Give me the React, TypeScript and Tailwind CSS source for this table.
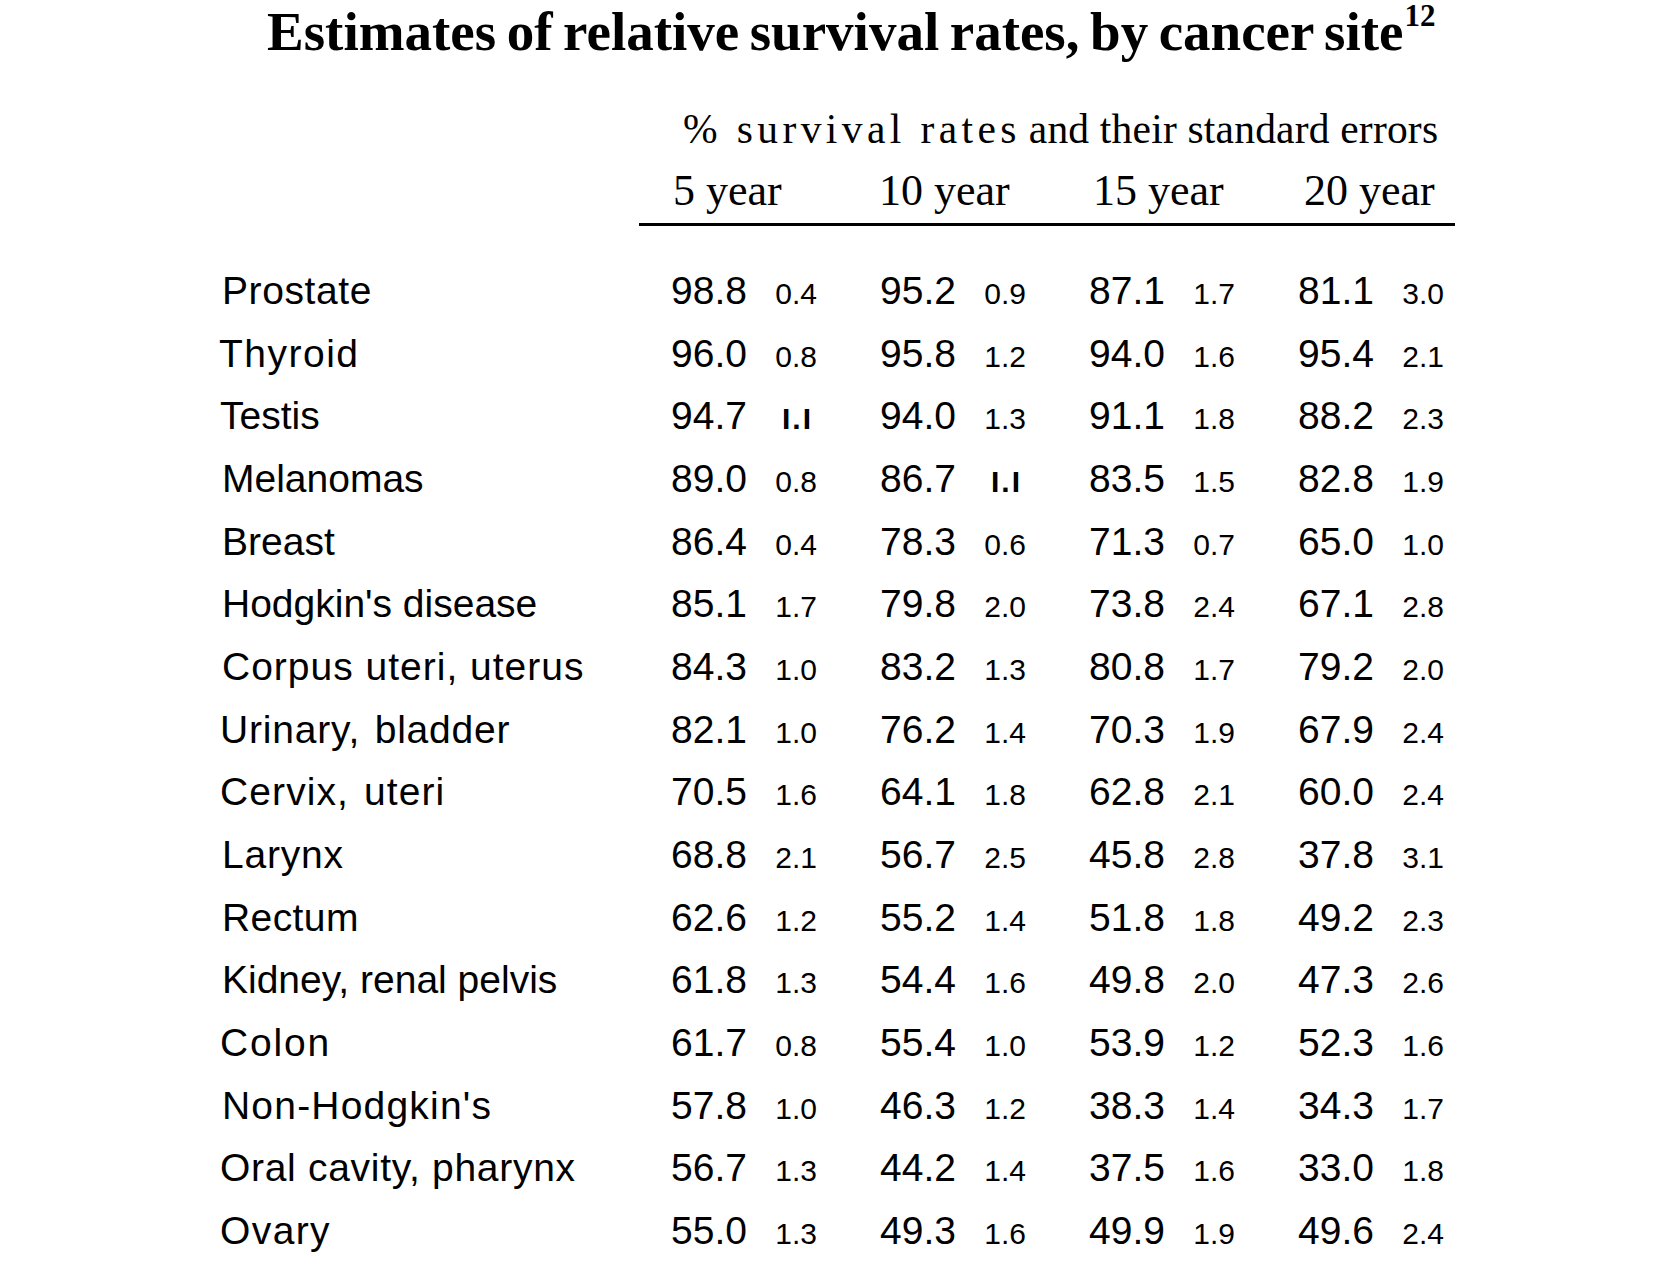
import React from "react";

type Cell = [string, string];
type Row = { name: string; cls: string; cells: Cell[] };

const rows: Row[] = [
  { name: "Prostate", cls: "tracking-[0.6px]", cells: [["98.8", "0.4"], ["95.2", "0.9"], ["87.1", "1.7"], ["81.1", "3.0"]] },
  { name: "Thyroid", cls: "tracking-[1.5px] -ml-[3px]", cells: [["96.0", "0.8"], ["95.8", "1.2"], ["94.0", "1.6"], ["95.4", "2.1"]] },
  { name: "Testis", cls: "-ml-[2px]", cells: [["94.7", "I.I"], ["94.0", "1.3"], ["91.1", "1.8"], ["88.2", "2.3"]] },
  { name: "Melanomas", cls: "", cells: [["89.0", "0.8"], ["86.7", "I.I"], ["83.5", "1.5"], ["82.8", "1.9"]] },
  { name: "Breast", cls: "", cells: [["86.4", "0.4"], ["78.3", "0.6"], ["71.3", "0.7"], ["65.0", "1.0"]] },
  { name: "Hodgkin's disease", cls: "", cells: [["85.1", "1.7"], ["79.8", "2.0"], ["73.8", "2.4"], ["67.1", "2.8"]] },
  { name: "Corpus uteri, uterus", cls: "tracking-[1px]", cells: [["84.3", "1.0"], ["83.2", "1.3"], ["80.8", "1.7"], ["79.2", "2.0"]] },
  { name: "Urinary, bladder", cls: "tracking-[0.8px] [word-spacing:3px] -ml-[2px]", cells: [["82.1", "1.0"], ["76.2", "1.4"], ["70.3", "1.9"], ["67.9", "2.4"]] },
  { name: "Cervix, uteri", cls: "tracking-[1.1px] [word-spacing:3px] -ml-[2px]", cells: [["70.5", "1.6"], ["64.1", "1.8"], ["62.8", "2.1"], ["60.0", "2.4"]] },
  { name: "Larynx", cls: "tracking-[0.8px]", cells: [["68.8", "2.1"], ["56.7", "2.5"], ["45.8", "2.8"], ["37.8", "3.1"]] },
  { name: "Rectum", cls: "tracking-[0.4px]", cells: [["62.6", "1.2"], ["55.2", "1.4"], ["51.8", "1.8"], ["49.2", "2.3"]] },
  { name: "Kidney, renal pelvis", cls: "", cells: [["61.8", "1.3"], ["54.4", "1.6"], ["49.8", "2.0"], ["47.3", "2.6"]] },
  { name: "Colon", cls: "tracking-[1.8px] -ml-[2px]", cells: [["61.7", "0.8"], ["55.4", "1.0"], ["53.9", "1.2"], ["52.3", "1.6"]] },
  { name: "Non-Hodgkin's", cls: "tracking-[1.2px]", cells: [["57.8", "1.0"], ["46.3", "1.2"], ["38.3", "1.4"], ["34.3", "1.7"]] },
  { name: "Oral cavity, pharynx", cls: "tracking-[0.7px] -ml-[2px]", cells: [["56.7", "1.3"], ["44.2", "1.4"], ["37.5", "1.6"], ["33.0", "1.8"]] },
  { name: "Ovary", cls: "tracking-[1.4px] -ml-[2px]", cells: [["55.0", "1.3"], ["49.3", "1.6"], ["49.9", "1.9"], ["49.6", "2.4"]] },
];

const headers: { text: string; cls: string }[] = [
  { text: "5 year", cls: "w-[206px]" },
  { text: "10 year", cls: "w-[214px]" },
  { text: "15 year", cls: "w-[211px]" },
  { text: "20 year", cls: "w-[209px]" },
];

export default function App() {
  return (
    <div className="w-[1668px] min-h-[1274px] bg-white text-black">
      {/* Title */}
      <div className="pl-[267px] pt-[2px] h-[62px] whitespace-nowrap font-['Liberation_Serif','Times_New_Roman',serif] font-bold text-[55px] leading-[60px] [word-spacing:-3.2px]">
        Estimates of relative survival rates, by cancer site
        <span className="relative top-[-24px] ml-[1px] text-[31px] leading-none">12</span>
      </div>

      {/* Subtitle */}
      <div className="mt-[42px] pl-[683px] h-[50px] whitespace-nowrap font-['Liberation_Serif','Times_New_Roman',serif] text-[41.5px] leading-[50px]">
        <span className="tracking-[4.4px]">% survival rates</span>
        <span className="ml-[8px] tracking-[0.2px]">and their standard errors</span>
      </div>

      {/* Column headers */}
      <div className="mt-[12px] pl-[673px] h-[50px] flex font-['Liberation_Serif','Times_New_Roman',serif] text-[44px] leading-[50px] whitespace-nowrap">
        {headers.map((h) => (
          <div key={h.text} className={h.cls}>
            {h.text}
          </div>
        ))}
      </div>

      {/* Rule */}
      <div className="mt-[7px] ml-[639px] w-[816px] h-[3px] bg-black" />

      {/* Rows */}
      <div className="mt-[34px] pl-[222px] font-['Liberation_Sans',Arial,sans-serif]">
        {rows.map((r) => (
          <div key={r.name} className="flex items-baseline h-[62.67px] leading-[62.67px] whitespace-nowrap">
            <div className="w-[449px] text-[39px]">
              <span className={r.cls}>{r.name}</span>
            </div>
            {r.cells.map(([big, small], i) => (
              <div key={i} className="w-[209px] flex items-baseline">
                <span className="w-[76px] text-[39px]">{big}</span>
                <span
                  className={
                    small === "I.I"
                      ? "w-[66px] text-right text-[30px] font-bold tracking-[2px]"
                      : "w-[70px] text-right text-[30px]"
                  }
                >
                  {small}
                </span>
              </div>
            ))}
          </div>
        ))}
      </div>
    </div>
  );
}
